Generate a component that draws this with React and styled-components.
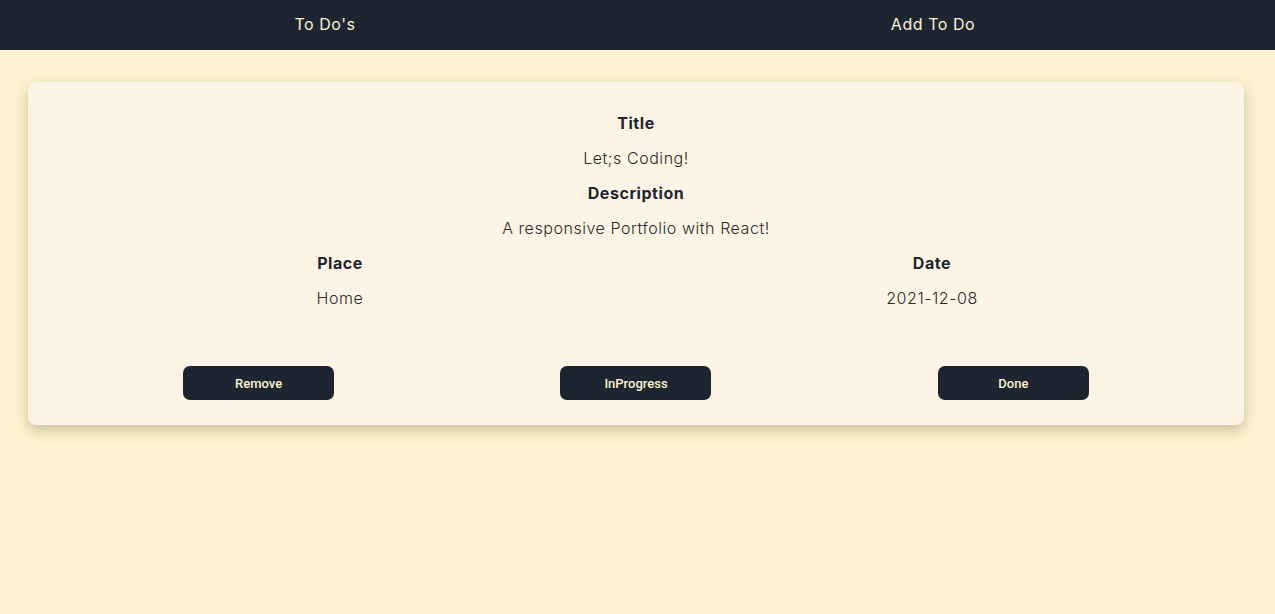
import React from 'react';
import styled, { createGlobalStyle } from 'styled-components';

//----GLOBAL----//

const GlobalStyle = createGlobalStyle`
  html, body {
    margin: 0;
    padding: 0;
    min-height: 100vh;
    background-color: #fcf4d0;
    font-family: 'Inter', 'Noto Sans', sans-serif;
    letter-spacing: 0.55px;
  }
`;

//----COMPONENT STYLING----//

const NavBar = styled.nav`
  display: grid;
  grid-template-columns: 1fr 1fr;
  height: 50px;
  padding: 0 38px 0 21px;
  background-color: #1c2530;
`;

const NavLink = styled.a`
  display: flex;
  align-items: center;
  justify-content: center;
  padding-bottom: 2px;
  color: #fdf3d0;
  font-size: 16px;
  font-weight: 400;
  text-decoration: none;
  cursor: pointer;
`;

const Main = styled.main`
  padding: 32px 31px 60px 28px;
`;

const Card = styled.div`
  background-color: #fef4e6;
  border-radius: 8px;
  box-shadow: 0 5px 14px rgba(110, 90, 50, 0.35);
  padding: 24px 16px 25px;
`;

const Field = styled.div`
  display: flex;
  flex-direction: column;
  align-items: center;
  line-height: 35px;
  font-size: 16px;
`;

const Label = styled.span`
  font-weight: 700;
  color: #1c2530;
`;

const Value = styled.span`
  font-weight: 300;
  color: #2a2a2a;
`;

const TwoCols = styled.div`
  display: grid;
  grid-template-columns: 1fr 1fr;
`;

const ButtonRow = styled.div`
  display: grid;
  grid-template-columns: repeat(3, 1fr);
  justify-items: center;
  margin-top: 50px;
  padding: 0 26px;
`;

const ActionButton = styled.button`
  width: 151px;
  height: 34px;
  border: none;
  border-radius: 7px;
  background-color: #1c2530;
  color: #fdf3d0;
  font-family: 'Roboto', 'Liberation Sans', sans-serif;
  font-weight: 500;
  font-size: 13px;
  letter-spacing: 0;
  cursor: pointer;
`;

//----COMPONENT BUILDS----//

const todo = {
  title: "Let;s Coding!",
  description: 'A responsive Portfolio with React!',
  place: 'Home',
  date: '2021-12-08',
};

const App = () => {
  return (
    <>
      <GlobalStyle />
      <NavBar>
        <NavLink>To Do's</NavLink>
        <NavLink>Add To Do</NavLink>
      </NavBar>
      <Main>
        <Card>
          <Field>
            <Label>Title</Label>
            <Value>{todo.title}</Value>
          </Field>
          <Field>
            <Label>Description</Label>
            <Value>{todo.description}</Value>
          </Field>
          <TwoCols>
            <Field>
              <Label>Place</Label>
              <Value>{todo.place}</Value>
            </Field>
            <Field>
              <Label>Date</Label>
              <Value>{todo.date}</Value>
            </Field>
          </TwoCols>
          <ButtonRow>
            <ActionButton>Remove</ActionButton>
            <ActionButton>InProgress</ActionButton>
            <ActionButton>Done</ActionButton>
          </ButtonRow>
        </Card>
      </Main>
    </>
  );
};

export default App;
